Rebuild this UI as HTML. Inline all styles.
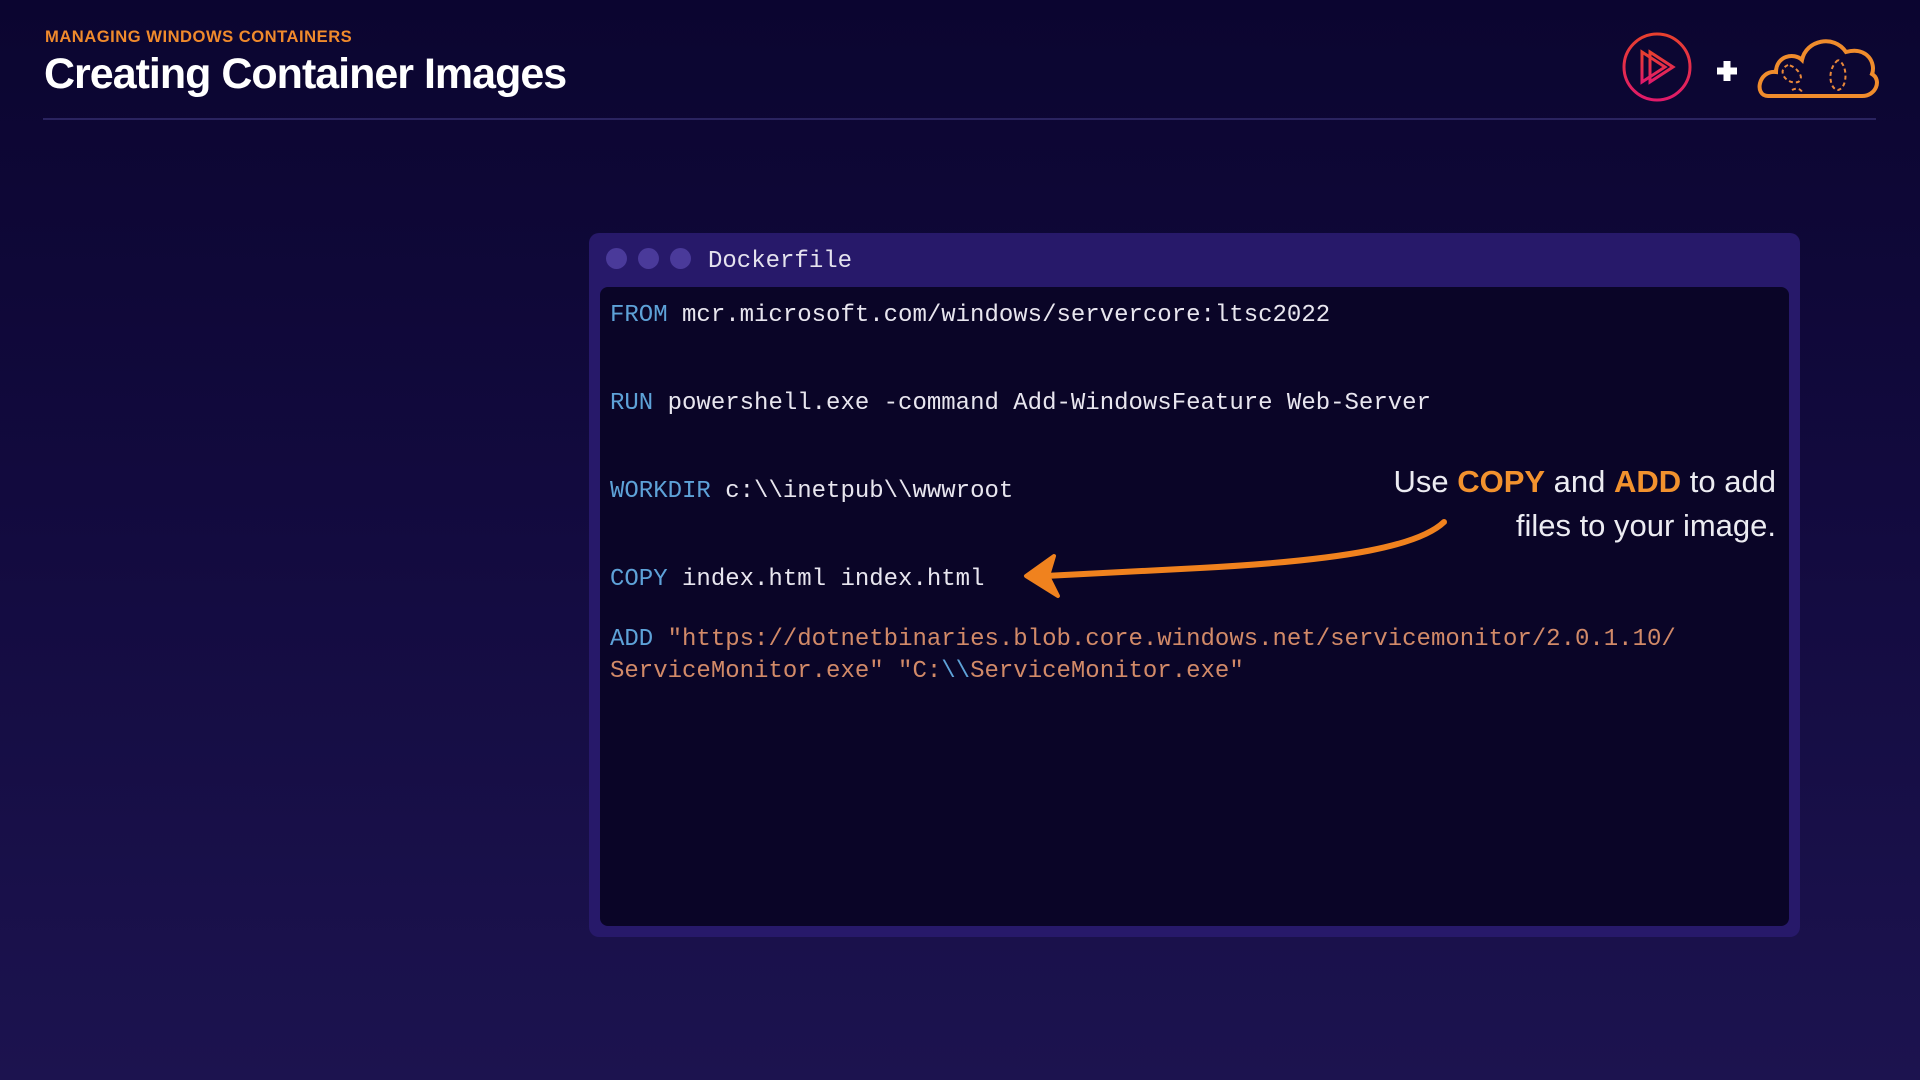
<!DOCTYPE html>
<html><head><meta charset="utf-8"><style>
*{margin:0;padding:0;box-sizing:border-box}
html,body{width:1920px;height:1080px;overflow:hidden}
body{background:linear-gradient(180deg,#0b0530 0%,#120a3e 45%,#1c134f 100%);font-family:"Liberation Sans",sans-serif;position:relative}
.sub{position:absolute;left:45px;top:27px;color:#f08a2c;font-weight:bold;font-size:16.6px;letter-spacing:0.5px}
.title{position:absolute;left:44px;top:50px;color:#fff;font-weight:bold;font-size:43px;letter-spacing:-1px}
.rule{position:absolute;left:43px;top:118px;width:1833px;height:2px;background:#2a2360}
.win{position:absolute;left:589px;top:233px;width:1211px;height:704px;background:#27196a;border-radius:10px}
.dot{position:absolute;top:248px;width:21px;height:21px;border-radius:50%;background:#4a3a9a}
.fname{position:absolute;left:708px;top:248px;color:#e4e2ee;font-family:"Liberation Mono",monospace;font-size:24px}
.code{position:absolute;left:600px;top:287px;width:1189px;height:639px;background:#0a0527;border-radius:8px}
.ln{position:absolute;left:610px;font-family:"Liberation Mono",monospace;font-size:24px;color:#e8e6ef;white-space:pre}
.k{color:#5ea2d8}
.s{color:#d28a68}
.ann{position:absolute;right:144px;text-align:right;color:#ececf2;font-size:31px;white-space:nowrap}
.ann b{color:#f2922e}
</style></head><body>
<div class="sub">MANAGING WINDOWS CONTAINERS</div>
<div class="title">Creating Container Images</div>
<div class="rule"></div>
<svg style="position:absolute;left:1620px;top:30px" width="270" height="75" viewBox="0 0 270 75">
<defs><linearGradient id="g" x1="0" y1="0" x2="0" y2="1"><stop offset="0" stop-color="#e8402e"/><stop offset="1" stop-color="#e01a6a"/></linearGradient></defs>
<circle cx="37" cy="37" r="33" fill="none" stroke="url(#g)" stroke-width="3"/>
<path d="M22 22 L22 52 L45 37 Z M30 22 L30 52 L53 37 Z" fill="none" stroke="url(#g)" stroke-width="3" stroke-linejoin="miter"/>
<path d="M97 41 h20 M107 31 v20" stroke="#fff" stroke-width="7"/>
<path d="M148 66 C134 66 138 40 156 42 C156 26 174 22 182 30 C186 10 214 4 226 22 C248 16 256 34 252 44 C262 50 256 66 242 66 Z" fill="none" stroke="#f08c2c" stroke-width="4"/>
<path d="M168 35 C156 40 166 55 178 52 C186 48 176 36 168 35 M172 60 C181 55 186 66 180 66 M218 30 C206 40 210 60 218 60 C228 58 228 34 218 30" fill="none" stroke="#e9883a" stroke-width="2" stroke-dasharray="4 3"/>
</svg>
<div class="win"></div>
<div class="dot" style="left:606px"></div>
<div class="dot" style="left:638px"></div>
<div class="dot" style="left:670px"></div>
<div class="fname">Dockerfile</div>
<div class="code"></div>
<div class="ln" style="top:302px"><span class="k">FROM</span> mcr.microsoft.com/windows/servercore:ltsc2022</div>
<div class="ln" style="top:390px"><span class="k">RUN</span> powershell.exe -command Add-WindowsFeature Web-Server</div>
<div class="ln" style="top:478px"><span class="k">WORKDIR</span> c:\\inetpub\\wwwroot</div>
<div class="ln" style="top:566px"><span class="k">COPY</span> index.html index.html</div>
<div class="ln" style="top:626px"><span class="k">ADD</span> <span class="s">"https://dotnetbinaries.blob.core.windows.net/servicemonitor/2.0.1.10/</span></div>
<div class="ln" style="top:658px"><span class="s">ServiceMonitor.exe" "C:</span><span class="k">\\</span><span class="s">ServiceMonitor.exe"</span></div>
<div class="ann" style="top:464px">Use <b>COPY</b> and <b>ADD</b> to add</div>
<div class="ann" style="top:508px">files to your image.</div>
<svg style="position:absolute;left:0;top:0" width="1920" height="1080">
<path d="M1444 522 C1420 545 1350 560 1200 568 C1130 572 1080 574 1045 576" fill="none" stroke="#f0821e" stroke-width="6" stroke-linecap="round"/>
<path d="M1054 556 L1026 576 L1058 596 L1048 576 Z" fill="#f0821e" stroke="#f0821e" stroke-width="4" stroke-linejoin="round"/>
</svg>
</body></html>
